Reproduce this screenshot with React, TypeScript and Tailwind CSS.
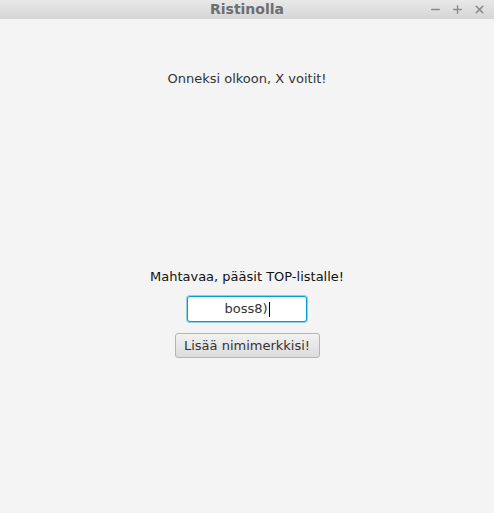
import { Minus, Plus, X } from 'lucide-react';

export default function App() {
  return (
    <div className="flex h-[513px] w-[494px] flex-col bg-[#f4f4f4] font-['DejaVu_Sans',sans-serif] text-[13px]">
      {/* Title bar */}
      <div className="relative flex h-[19px] items-center justify-center bg-gradient-to-b from-[#e8e8e8] to-[#d6d6d6]">
        <span className="text-[14px] font-bold text-[#6e6e6e]">Ristinolla</span>
        <div className="absolute right-[8px] top-[3px] flex items-center gap-[9px] text-[#8a8a8a]">
          <Minus size={13} strokeWidth={2.5} />
          <Plus size={13} strokeWidth={2.5} />
          <X size={13} strokeWidth={3} />
        </div>
      </div>

      {/* Content */}
      <div className="flex flex-col items-center">
        <div className="mt-[50px] text-[#333]">Onneksi olkoon, X voitit!</div>

        <div className="mt-[178px] text-[#111]">Mahtavaa, pääsit TOP-listalle!</div>

        <div className="mt-[10px] flex h-[26px] w-[120px] items-center justify-center rounded-[3px] border border-[#039ed3] bg-white text-[#333] shadow-[0_0_0_1px_#8fd0ea]">
          <span>boss8)</span>
          <span className="ml-[1px] h-[15px] w-px bg-black" />
        </div>

        <button className="mt-[11px] h-[25px] w-[145px] rounded-[3px] border border-[#b5b5b5] bg-gradient-to-b from-[#f2f2f2] to-[#dcdcdc] text-[#333]">
          Lisää nimimerkkisi!
        </button>
      </div>
    </div>
  );
}
